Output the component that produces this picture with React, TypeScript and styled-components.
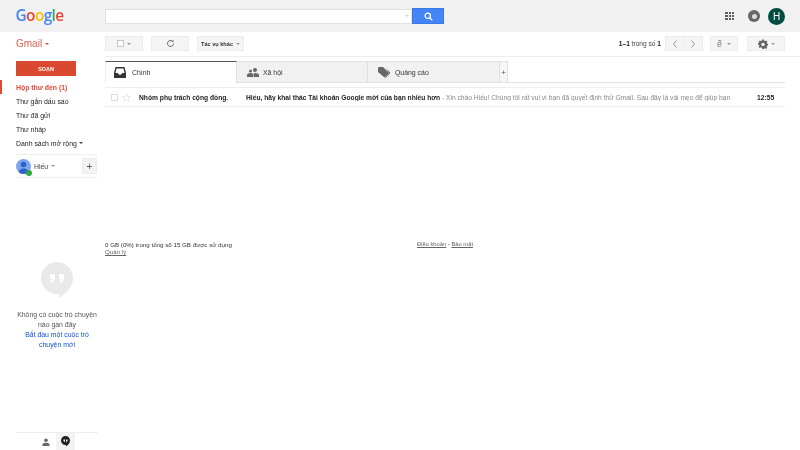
import React from "react";
import styled, { createGlobalStyle } from "styled-components";

const Global = createGlobalStyle`
  html, body { margin: 0; padding: 0; background: #fff; }
  body { font-family: "Liberation Sans", Arial, sans-serif; font-size: 6.9px; color: #222; }
  * { box-sizing: border-box; }
`;

const Page = styled.div`
  width: 800px; height: 450px; overflow: hidden; display: flex; flex-direction: column; background: #fff; filter: blur(0.3px);
`;
const Header = styled.header`
  height: 32px; background: #f1f1f1; display: flex; align-items: center; flex: none; padding-right: 15px;
`;
const LogoBox = styled.div`
  width: 105px; padding-left: 15.5px; flex: none;
`;
const Logo = styled.div`
  font-family: "Open Sans", sans-serif; font-weight: 600; font-size: 15.4px; letter-spacing: -0.6px; line-height: 20px; margin-top: -1px;
`;
const L = styled.span<{ $c: string }>`color: ${p => p.$c};`;
const SearchInput = styled.div`
  width: 307px; height: 15px; background: #fff; border: 1px solid #e2e2e2; display: flex; align-items: center; justify-content: flex-end; padding-right: 2px;
`;
const Tri = styled.i<{ $c?: string }>`
  display: inline-block; width: 0; height: 0; border-left: 2px solid transparent; border-right: 2px solid transparent; border-top: 2px solid ${p => p.$c || "#999"};
`;
const SearchBtn = styled.button`
  width: 32px; height: 16px; background: #4285f4; border: 1px solid #3b78e7; padding: 0; display: flex; align-items: center; justify-content: center;
`;
const HeaderRight = styled.div`
  margin-left: auto; display: flex; align-items: center;
`;
const AppGrid = styled.div`
  display: grid; grid-template-columns: repeat(3, 2.2px); gap: 1px; margin-right: 14px;
  i { width: 2.2px; height: 2.2px; background: #5f5f5f; display: block; }
`;
const Notif = styled.div`
  width: 12px; height: 12px; border-radius: 50%; background: #666; margin-right: 8px; display: flex; align-items: center; justify-content: center;
  &::after { content: ""; width: 5px; height: 5px; border-radius: 50%; background: #ddd; }
`;
const Avatar = styled.div`
  width: 17px; height: 17px; border-radius: 50%; background: #004d40; color: #fff; font-size: 10px; display: flex; align-items: center; justify-content: center;
`;
const Body = styled.div`
  flex: 1; display: flex; min-height: 0;
`;
const Sidebar = styled.aside`
  width: 105px; flex: none; display: flex; flex-direction: column;
`;
const GmailRow = styled.div`
  height: 23px; padding-left: 16px; display: flex; align-items: center; gap: 3px; color: #d9604f; font-size: 10px; flex: none;
`;
const Compose = styled.div`
  margin: 6px 0 0 16px; width: 60px; height: 15px; background: #d9492f; color: #fff; font-weight: bold; font-size: 5.4px; display: flex; align-items: center; justify-content: center; flex: none;
`;
const Nav = styled.nav`
  margin-top: 4px; flex: none;
`;
const NavItem = styled.div<{ $active?: boolean }>`
  height: 14px; display: flex; align-items: center; gap: 2px; padding-left: ${p => (p.$active ? 14 : 16)}px;
  border-left: ${p => (p.$active ? "2px solid #dd4b39" : "none")};
  color: ${p => (p.$active ? "#dd4b39" : "#222")};
  font-weight: ${p => (p.$active ? "bold" : "normal")};
`;
const ContactRow = styled.div`
  margin: 4px 8px 0 16px; height: 24px; border-top: 1px solid #eee; border-bottom: 1px solid #eee; display: flex; align-items: center; flex: none; color: #444; gap: 3px;
`;
const PersonIcon = styled.div`
  position: relative; width: 15px; height: 15px; border-radius: 50%; background: #7ba7f0; overflow: hidden; flex: none;
`;
const PersonWrap = styled.div`
  position: relative; width: 15px; height: 15px; flex: none;
`;
const Online = styled.span`
  position: absolute; right: -1px; bottom: -2px; width: 6px; height: 6px; border-radius: 50%; background: #2ea83f;
`;
const PlusBtn = styled.div`
  margin-left: auto; width: 15px; height: 16px; background: #f3f3f3; border: 1px solid #ececec; color: #555; font-size: 10px; display: flex; align-items: center; justify-content: center;
`;
const Hangouts = styled.div`
  margin-top: 84px; display: flex; flex-direction: column; align-items: center; padding-left: 9px; flex: none; width: 105px;
`;
const HangoutsText = styled.div`
  margin-top: 9px; width: 84px; text-align: center; color: #555; line-height: 10px;
`;
const Blue = styled.div`
  color: #15c; padding: 0 6px;
`;
const BottomBar = styled.div`
  margin: auto 7px 0 16px; height: 18px; border-top: 1px solid #eee; display: flex; justify-content: center; padding-right: 3px; flex: none;
`;
const BottomBtn = styled.div<{ $on?: boolean }>`
  width: 19px; display: flex; align-items: center; justify-content: center; background: ${p => (p.$on ? "#f3f3f3" : "transparent")};
`;
const Main = styled.main`
  flex: 1; padding-right: 15px; min-width: 0;
`;
const Toolbar = styled.div`
  height: 25px; margin-right: -15px; padding-right: 15px; border-bottom: 1px solid #eee; display: flex; align-items: flex-start; padding-top: 4px;
`;
const ToolBtn = styled.div<{ $w: number; $ml?: number }>`
  width: ${p => p.$w}px; height: 15px; margin-left: ${p => p.$ml || 0}px; background: #f5f5f5; border: 1px solid #ececec; display: flex; align-items: center; justify-content: center; gap: 3px; flex: none; color: #333; font-size: 5.6px; font-weight: bold;
`;
const Box = styled.span`
  width: 7px; height: 7px; border: 1px solid #c6c6c6; background: #fdfdfd; display: block; flex: none;
`;
const Count = styled.div`
  margin-left: auto; margin-right: 4px; height: 15px; display: flex; align-items: center; color: #444; font-size: 6.6px;
  b { color: #222; }
`;
const Pager = styled.div`
  display: flex; flex: none;
`;
const PageBtn = styled(ToolBtn)`
  & + & { border-left: none; }
`;
const Accent = styled.span`
  font-size: 9px; font-weight: normal; color: #777; margin-right: 2px;
`;
const Tabs = styled.div`
  margin-top: 4px; height: 22px; display: flex; border-bottom: 1px solid #e3e3e3;
`;
const Tab = styled.div<{ $on?: boolean; $w: number; $gap?: number }>`
  width: ${p => p.$w}px; height: ${p => (p.$on ? 22 : 21)}px; flex: none; display: flex; align-items: center; gap: ${p => p.$gap ?? 6}px; padding-left: ${p => (p.$on ? 8 : 9)}px;
  background: ${p => (p.$on ? "#fff" : "#f1f1f1")};
  border-top: 1px solid ${p => (p.$on ? "#555" : "#e3e3e3")};
  border-left: 1px solid ${p => (p.$on ? "#eee" : "transparent")};
  border-right: 1px solid #e0e0e0;
  color: #333;
`;
const TabPlus = styled.div`
  width: 8px; height: 21px; background: #f6f6f6; border-top: 1px solid #e3e3e3; border-right: 1px solid #e3e3e3; color: #555; font-size: 8px; display: flex; align-items: center; justify-content: center;
`;
const MailRow = styled.div`
  margin-top: 4px; height: 20px; border-top: 1px solid #eee; border-bottom: 1px solid #eee; display: flex; align-items: center; white-space: nowrap; overflow: hidden; padding-left: 6px;
`;
const RowBox = styled(Box)`
  border-color: #ddd; background: #fff;
`;
const StarWrap = styled.span`
  margin-left: 4px; width: 9px; height: 9px; display: flex; flex: none;
`;
const Sender = styled.b`
  width: 107px; margin-left: 8px; flex: none; font-size: 6.7px;
`;
const Subject = styled.div`
  width: 511px; flex: none; overflow: hidden; font-size: 6.68px; color: #888;
  b { color: #222; }
`;
const Time = styled.b`
  font-size: 6.7px;
`;
const Footer = styled.div`
  margin-top: 134px; width: 368px; display: flex; justify-content: space-between; font-size: 6.2px; line-height: 7px; color: #333;
`;
const FLink = styled.u`
  color: #666;
`;
const Links = styled.div`
  font-size: 5.8px;
`;

const Star = () => (
  <svg width="9" height="9" viewBox="0 0 24 24" fill="none" stroke="#e2e2e2" strokeWidth="2">
    <path d="M12 2l3 7 7.5.6-5.7 5 1.800 7.400L12 18l-6.600 4 1.800-7.400-5.700-5L9 9z" />
  </svg>
);

export default function App() {
  return (
    <Page>
      <Global />
      <Header>
        <LogoBox>
          <Logo>
            <L $c="#4285f4">G</L><L $c="#ea4335">o</L><L $c="#fbbc05">o</L><L $c="#4285f4">g</L><L $c="#34a853">l</L><L $c="#ea4335">e</L>
          </Logo>
        </LogoBox>
        <SearchInput><Tri $c="#e5d6b8" /></SearchInput>
        <SearchBtn>
          <svg width="9" height="9" viewBox="0 0 24 24" fill="none" stroke="#fff" strokeWidth="3.6">
            <circle cx="10" cy="10" r="7" /><path d="M15 15l7 7" />
          </svg>
        </SearchBtn>
        <HeaderRight>
          <AppGrid>{Array.from({ length: 9 }, (_, i) => <i key={i} />)}</AppGrid>
          <Notif />
          <Avatar>H</Avatar>
        </HeaderRight>
      </Header>
      <Body>
        <Sidebar>
          <GmailRow>Gmail <Tri $c="#dd4b39" /></GmailRow>
          <Compose>SOẠN</Compose>
          <Nav>
            <NavItem $active>Hộp thư đến (1)</NavItem>
            <NavItem>Thư gắn dấu sao</NavItem>
            <NavItem>Thư đã gửi</NavItem>
            <NavItem>Thư nháp</NavItem>
            <NavItem>Danh sách mở rộng <Tri $c="#444" /></NavItem>
          </Nav>
          <ContactRow>
            <PersonWrap>
              <PersonIcon>
                <svg width="15" height="15" viewBox="0 0 15 15">
                  <circle cx="7.5" cy="5.5" r="2.8" fill="#2f62c4" />
                  <path d="M2.5 15c0-4 2-5.500 5-5.500s5 1.500 5 5.500z" fill="#2f62c4" />
                </svg>
              </PersonIcon>
              <Online />
            </PersonWrap>
            Hiếu <Tri />
            <PlusBtn>+</PlusBtn>
          </ContactRow>
          <Hangouts>
            <svg width="32" height="39" viewBox="0 0 32 39">
              <path d="M16 0a16 16 0 0 1 16 16c0 9-7 16-14 19.500V32h-2A16 16 0 0 1 16 0z" fill="#e9e9e9" />
              <path d="M9 12h5v5l-2.500 4H9.500l1.500-4H9zM18 12h5v5l-2.500 4h-2l1.500-4h-2z" fill="#fff" />
            </svg>
            <HangoutsText>
              Không có cuộc trò chuyện nào gần đây
              <Blue>Bắt đầu một cuộc trò chuyện mới</Blue>
            </HangoutsText>
          </Hangouts>
          <BottomBar>
            <BottomBtn>
              <svg width="8" height="8" viewBox="0 0 8 8">
                <circle cx="4" cy="2.200" r="1.800" fill="#666" />
                <path d="M.5 8V6.500C.5 5.200 2.500 4.700 4 4.700s3.500.5 3.500 1.800V8z" fill="#666" />
              </svg>
            </BottomBtn>
            <BottomBtn $on>
              <svg width="9" height="11" viewBox="0 0 9 11">
                <path d="M4.500 0a4.500 4.500 0 0 1 4.500 4.500C9 7 7 9 5 10.500V9h-.5a4.500 4.500 0 0 1 0-9z" fill="#222" />
                <path d="M2.500 3.500h1.500v1.500l-.7 1.200h-.6l.4-1.200h-.6zM5 3.500h1.500v1.500l-.7 1.200h-.6l.4-1.200H5z" fill="#fff" />
              </svg>
            </BottomBtn>
          </BottomBar>
        </Sidebar>
        <Main>
          <Toolbar>
            <ToolBtn $w={38}><Box /><Tri /></ToolBtn>
            <ToolBtn $w={38} $ml={8}>
              <svg width="9" height="9" viewBox="0 0 24 24" fill="none" stroke="#666" strokeWidth="2.600">
                <path d="M20 12a8 8 0 1 1-2.500-5.800" /><path d="M20 2v6h-6" fill="#666" stroke="none" />
              </svg>
            </ToolBtn>
            <ToolBtn $w={47} $ml={8}>Tác vụ khác <Tri /></ToolBtn>
            <Count><b>1–1</b>&nbsp;trong số&nbsp;<b>1</b></Count>
            <Pager>
              <PageBtn $w={19}>
                <svg width="6" height="8" viewBox="0 0 6 8" fill="none" stroke="#999"><path d="M4.500 .5L1.500 4l3 3.500" /></svg>
              </PageBtn>
              <PageBtn $w={19}>
                <svg width="6" height="8" viewBox="0 0 6 8" fill="none" stroke="#999"><path d="M1.500 .5L4.500 4l-3 3.500" /></svg>
              </PageBtn>
            </Pager>
            <ToolBtn $w={28} $ml={7}><Accent>ế</Accent><Tri /></ToolBtn>
            <ToolBtn $w={38} $ml={9}>
              <svg width="10" height="10" viewBox="0 0 24 24" fill="#666">
                <path d="M10 1h4l.6 3 2.400 1 2.600-1.700 2.800 2.800L20.700 8.700l1 2.300 3 .6v3.800l-3 .6-1 2.300 1.700 2.600-2.800 2.800-2.600-1.700-2.400 1-.6 1H10l-.6-3-2.400-1-2.600 1.700-2.800-2.800 1.700-2.600-1-2.300-3-.6v-3.800l3-.6 1-2.300L1.600 6.100l2.800-2.800L7 5l2.400-1z" />
                <circle cx="12" cy="13" r="4" fill="#f5f5f5" />
              </svg>
              <Tri />
            </ToolBtn>
          </Toolbar>
          <Tabs>
            <Tab $on $w={132}>
              <svg width="12" height="11" viewBox="0 0 12 11">
                <path d="M1.500 0h9L12 6v5H0V6z" fill="#333" />
                <path d="M2.500 1.500h7L10.500 6H8.200C8 7 7 7.700 6 7.700S4 7 3.800 6H1.500z" fill="#fff" />
              </svg>
              Chính
            </Tab>
            <Tab $w={131} $gap={4}>
              <svg width="12" height="9" viewBox="0 0 12 9" fill="#666">
                <circle cx="3.500" cy="3" r="1.500" /><circle cx="8" cy="2" r="2" />
                <path d="M0 9V7c0-1.300 2-2 3.500-2s2.500.5 2.500 2v2zM6.500 9V6.500c0-1 .5-1.500 1.500-1.500 2 0 4 .7 4 2v2z" />
              </svg>
              Xã hội
            </Tab>
            <Tab $w={132} $gap={5}>
              <svg width="12" height="11" viewBox="0 0 12 11" fill="#666">
                <path d="M0 1.500C0 .700.700 0 1.500 0H5l6 6-4.500 4.500L0 5z" />
                <path d="M8 1l4 4.500v1L7.500 11 7 10.500 11 6.200z" />
              </svg>
              Quảng cáo
            </Tab>
            <TabPlus>+</TabPlus>
          </Tabs>
          <MailRow>
            <RowBox />
            <StarWrap><Star /></StarWrap>
            <Sender>Nhóm phụ trách cộng đồng.</Sender>
            <Subject>
              <b>Hiếu, hãy khai thác Tài khoản Google mới của bạn nhiều hơn</b> - Xin chào Hiếu! Chúng tôi rất vui vì bạn đã quyết định thử Gmail. Sau đây là vài mẹo để giúp bạn
            </Subject>
            <Time>12:55</Time>
          </MailRow>
          <Footer>
            <div>
              0 GB (0%) trong tổng số 15 GB được sử dụng
              <br />
              <FLink>Quản lý</FLink>
            </div>
            <Links><FLink>Điều khoản</FLink> - <FLink>Bảo mật</FLink></Links>
          </Footer>
        </Main>
      </Body>
    </Page>
  );
}
